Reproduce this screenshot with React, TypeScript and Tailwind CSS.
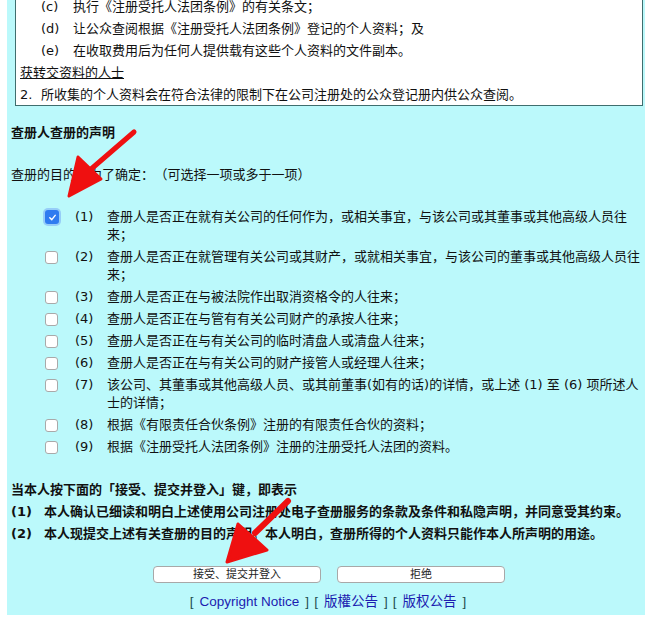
import React from "react";

const boxRows = [
  { label: "(c)", text: "执行《注册受托人法团条例》的有关条文；" },
  { label: "(d)", text: "让公众查阅根据《注册受托人法团条例》登记的个人资料；及" },
  { label: "(e)", text: "在收取费用后为任何人提供载有这些个人资料的文件副本。" },
];

const purposes = [
  "查册人是否正在就有关公司的任何作为，或相关事宜，与该公司或其董事或其他高级人员往来；",
  "查册人是否正在就管理有关公司或其财产，或就相关事宜，与该公司的董事或其他高级人员往来；",
  "查册人是否正在与被法院作出取消资格令的人往来；",
  "查册人是否正在与管有有关公司财产的承按人往来；",
  "查册人是否正在与有关公司的临时清盘人或清盘人往来；",
  "查册人是否正在与有关公司的财产接管人或经理人往来；",
  "该公司、其董事或其他高级人员、或其前董事(如有的话)的详情，或上述 (1) 至 (6) 项所述人士的详情；",
  "根据《有限责任合伙条例》注册的有限责任合伙的资料；",
  "根据《注册受托人法团条例》注册的注册受托人法团的资料。",
];

function Checkbox({ checked }: { checked?: boolean }) {
  if (checked) {
    return (
      <span className="flex h-[14px] w-[14px] items-center justify-center rounded-[3px] bg-[#2f7bf0] shadow-[0_0_0_2px_rgba(120,170,245,0.55)]">
        <svg viewBox="0 0 10 10" className="h-[9px] w-[9px]">
          <path d="M2 5.2 L4.2 7.4 L8 2.6" fill="none" stroke="white" strokeWidth="1.6" strokeLinecap="round" strokeLinejoin="round" />
        </svg>
      </span>
    );
  }
  return <span className="block h-[13px] w-[13px] rounded-[3px] border border-[#a9a9a9] bg-white" />;
}

function RedArrows() {
  return (
    <svg className="pointer-events-none absolute left-0 top-0" width="645" height="629" viewBox="0 0 645 629">
      <g fill="#ef1010" stroke="#ef1010" strokeLinejoin="round" strokeLinecap="round">
        <path d="M134 132 L90 170" strokeWidth="5" fill="none" />
        <polygon points="78,157 101,179 69,196" strokeWidth="3" />
        <path d="M288 501 L255 533" strokeWidth="6" fill="none" />
        <polygon points="238,524 267,550 227,562" strokeWidth="3" />
      </g>
    </svg>
  );
}

export default function App() {
  return (
    <div className="relative h-[629px] w-[645px] overflow-hidden bg-white text-[13px] text-[#111] [font-family:'DejaVu_Sans','Noto_Sans_CJK_SC',sans-serif]">
      <div className="ml-[7px] bg-[#bbf9fb] pb-[3px]">
        {/* notice box, top part scrolled off */}
        <div className="-mt-[5px] ml-[8px] mr-[2px] border border-[#3f6e6e] bg-white">
          {boxRows.map((r) => (
            <div key={r.label} className="flex h-[22px] items-center pl-[25px]">
              <span className="w-[32px]">{r.label}</span>
              <span>{r.text}</span>
            </div>
          ))}
          <div className="flex h-[22px] items-center pl-[4px]">
            <span className="underline">获转交资料的人士</span>
          </div>
          <div className="flex h-[21px] items-center pl-[4px]">
            <span className="w-[21px]">2.</span>
            <span>所收集的个人资料会在符合法律的限制下在公司注册处的公众登记册内供公众查阅。</span>
          </div>
        </div>

        <div className="mt-[16px] pl-[4px] font-bold leading-[22px]">查册人查册的声明</div>
        <div className="mt-[20px] pl-[4px] leading-[22px]">
          查册的目的是为了确定：<span className="ml-[7px]">（可选择一项或多于一项）</span>
        </div>

        <div className="mt-[20px]">
          {purposes.map((p, i) => (
            <div key={i} className="flex items-start py-[2px] pl-[38px] leading-[18px]">
              <span className="flex h-[18px] w-[14px] items-center">
                <Checkbox checked={i === 0} />
              </span>
              <span className="ml-[16px] w-[32px] shrink-0">({i + 1})</span>
              <span className="flex-1">{p}</span>
            </div>
          ))}
        </div>

        <div className="mt-[21px] pl-[4px] font-bold">
          <div className="leading-[22px]">当本人按下面的「接受、提交并登入」键，即表示</div>
          <div className="flex leading-[22px]">
            <span className="w-[33px]">(1)</span>
            <span>本人确认已细读和明白上述使用公司注册处电子查册服务的条款及条件和私隐声明，并同意受其约束。</span>
          </div>
          <div className="flex leading-[21px]">
            <span className="w-[33px]">(2)</span>
            <span>本人现提交上述有关查册的目的声明。本人明白，查册所得的个人资料只能作本人所声明的用途。</span>
          </div>
        </div>

        <div className="mt-[22px] flex justify-center gap-[16px] pl-[6px]">
          <button className="h-[17px] w-[168px] rounded-[4px] border border-[#a8a8a8] bg-white text-[11px] leading-[15px] text-[#222]">
            接受、提交并登入
          </button>
          <button className="h-[17px] w-[168px] rounded-[4px] border border-[#a8a8a8] bg-white text-[11px] leading-[15px] text-[#222]">
            拒绝
          </button>
        </div>

        <div className="mt-[9px] flex h-[20px] items-center justify-center pl-[4px] text-[13.5px] text-[#234f4f] [font-family:'Liberation_Sans','Noto_Sans_CJK_SC',sans-serif]">
          <span>[</span>
          <a className="mx-[6px] text-[#1c1cb0]">Copyright Notice</a>
          <span>]</span>
          <span className="ml-[5px]">[</span>
          <a className="mx-[6px] text-[#1c1cb0]">版權公告</a>
          <span>]</span>
          <span className="ml-[5px]">[</span>
          <a className="mx-[6px] text-[#1c1cb0]">版权公告</a>
          <span>]</span>
        </div>
      </div>
      <RedArrows />
    </div>
  );
}
